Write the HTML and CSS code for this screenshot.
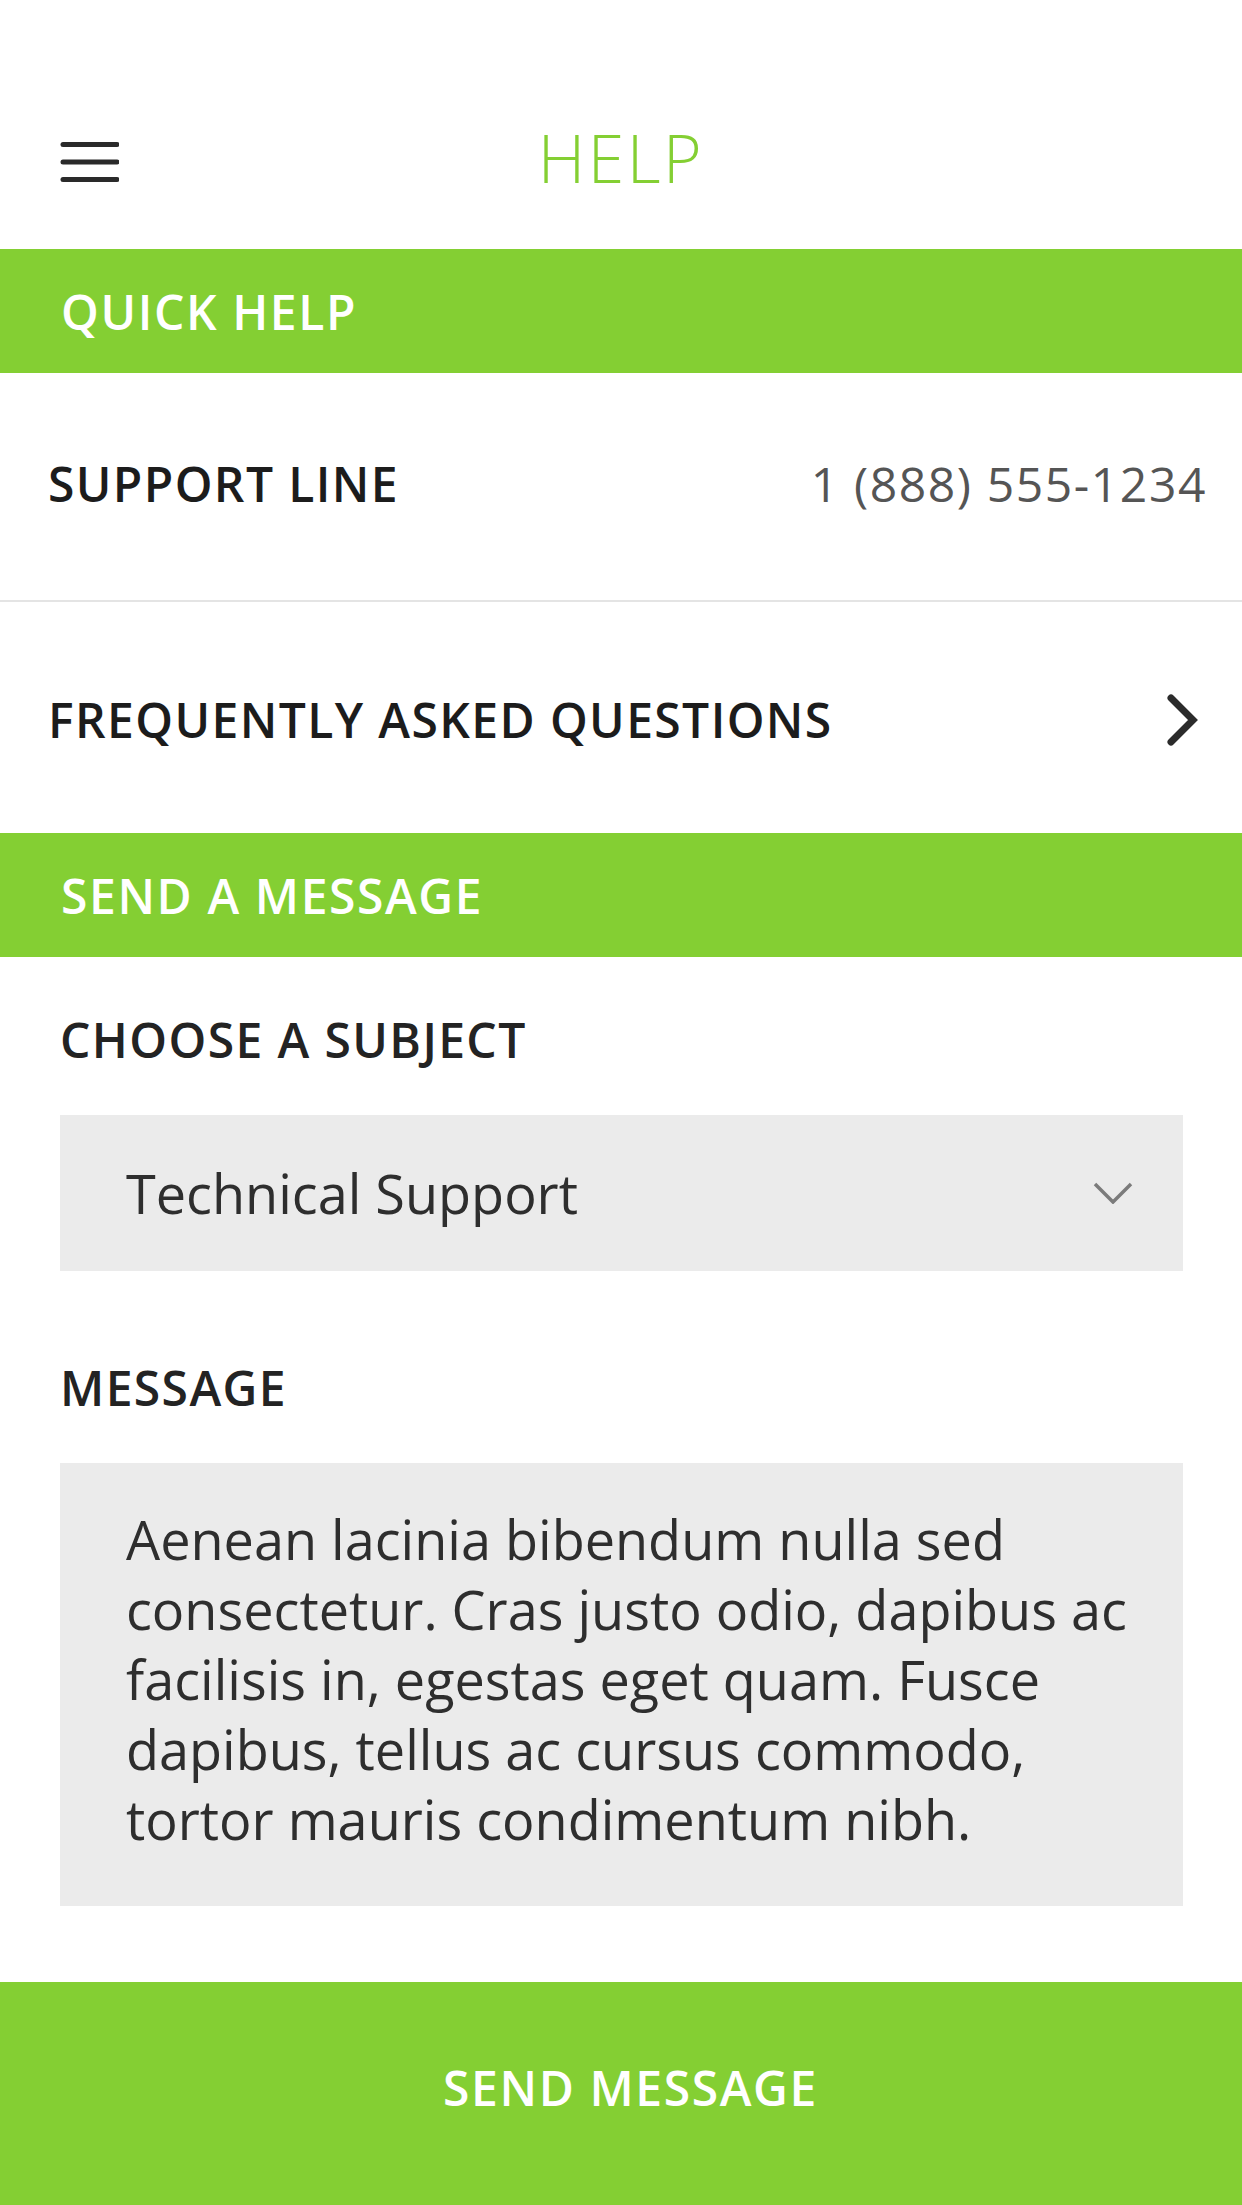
FILE: index.html
```html
<!DOCTYPE html>
<html lang="en">
<head>
<meta charset="utf-8">
<title>Help</title>
<link rel="stylesheet" href="styles.css">
</head>
<body>
<div class="screen">
  <header class="topbar">
    <div class="topbar-left">
      <svg class="menu-icon" width="60" height="40" viewBox="0 0 60 40" aria-hidden="true">
        <line x1="4" y1="2.5" x2="58" y2="2.5"/>
        <line x1="4" y1="20" x2="58" y2="20"/>
        <line x1="4" y1="37.5" x2="58" y2="37.5"/>
      </svg>
    </div>
    <h1 class="title">HELP</h1>
    <div class="topbar-right"></div>
  </header>

  <div class="section-bar">QUICK HELP</div>

  <div class="row row-support">
    <span class="row-label">SUPPORT LINE</span>
    <span class="row-value">1 (888) 555-1234</span>
  </div>
  <div class="row row-faq">
    <span class="row-label">FREQUENTLY ASKED QUESTIONS</span>
    <svg class="chev-right" width="34" height="54" viewBox="0 0 34 54" aria-hidden="true">
      <polyline points="6,5 28,27 6,49"/>
    </svg>
  </div>

  <div class="section-bar">SEND A MESSAGE</div>

  <div class="form">
    <div class="field-label">CHOOSE A SUBJECT</div>
    <div class="select">
      <span class="select-text">Technical Support</span>
      <svg class="chev-down" width="40" height="22" viewBox="0 0 40 22" aria-hidden="true">
        <polyline points="2,2 20,20 38,2"/>
      </svg>
    </div>
    <div class="field-label field-label-2">MESSAGE</div>
    <div class="message">Aenean lacinia bibendum nulla sed<br>consectetur. Cras justo odio, dapibus ac<br>facilisis in, egestas eget quam. Fusce<br>dapibus, tellus ac cursus commodo,<br>tortor mauris condimentum nibh.</div>
  </div>

  <div class="send-btn">SEND MESSAGE</div>
</div>
</body>
</html>
```

FILE: styles.css
```css
* { box-sizing: border-box; }
html, body { margin: 0; padding: 0; background: #ffffff; }
body {
  font-family: "Open Sans", "Noto Sans", "Liberation Sans", sans-serif;
  color: #1c1c1c;
}
.screen {
  width: 1242px;
  height: 2205px;
  overflow: hidden;
  display: flex;
  flex-direction: column;
}

/* top bar */
.topbar {
  height: 249px;
  padding-top: 64px;
  display: grid;
  grid-template-columns: 1fr auto 1fr;
  align-items: center;
}
.topbar-left { padding-left: 59px; display: flex; align-items: center; margin-top: 10px; }
.menu-icon line { stroke: #2a2a2a; stroke-width: 5; stroke-linecap: round; }
.title {
  margin: 0;
  font-size: 66px;
  font-weight: 300;
  line-height: 80px;
  letter-spacing: 2.5px;
  color: #84cf33;
}

/* green section bars */
.section-bar {
  height: 124px;
  flex: none;
  background: #84cf33;
  color: #ffffff;
  display: flex;
  align-items: center;
  padding-left: 61px;
  font-size: 48px;
  font-weight: 600;
  letter-spacing: 1.6px;
}

/* list rows */
.row {
  display: flex;
  align-items: center;
  justify-content: space-between;
  flex: none;
}
.row-support {
  height: 229px;
  padding: 0 35px 6px 48px;
  border-bottom: 2px solid #e4e4e4;
}
.row-faq {
  height: 231px;
  padding: 4px 40px 0 48px;
}
.row-label {
  font-size: 48px;
  font-weight: 600;
  letter-spacing: 1.4px;
  color: #1c1c1c;
}
.row-value {
  font-size: 48px;
  font-weight: 400;
  letter-spacing: 1.6px;
  color: #555555;
}
.chev-right { margin-right: 3px; }
.chev-right polyline { fill: none; stroke: #2b2b2b; stroke-width: 7; stroke-linecap: round; stroke-linejoin: miter; }

/* form */
.form {
  padding: 53px 59px 0 60px;
  flex: none;
}
.field-label {
  height: 60px;
  line-height: 60px;
  font-size: 48px;
  font-weight: 600;
  letter-spacing: 1.4px;
  color: #232323;
  margin-bottom: 45px;
}
.field-label-2 { margin-top: 87px; }
.select {
  height: 156px;
  background: #ebebeb;
  display: flex;
  align-items: center;
  justify-content: space-between;
  padding: 0 50px 0 66px;
}
.select-text {
  font-size: 54px;
  color: #2e2e2e;
}
.chev-down polyline { fill: none; stroke: #7b7b7b; stroke-width: 3.5; }
.message {
  height: 443px;
  background: #ebebeb;
  padding: 41px 50px 0 66px;
  font-size: 54px;
  line-height: 70px;
  color: #2e2e2e;
}

/* button */
.send-btn {
  margin-top: 76px;
  height: 223px;
  flex: none;
  background: #84cf33;
  color: #ffffff;
  display: flex;
  align-items: center;
  justify-content: center;
  padding: 0 0 13px 19px;
  font-size: 48px;
  font-weight: 600;
  letter-spacing: 1.6px;
}
```
